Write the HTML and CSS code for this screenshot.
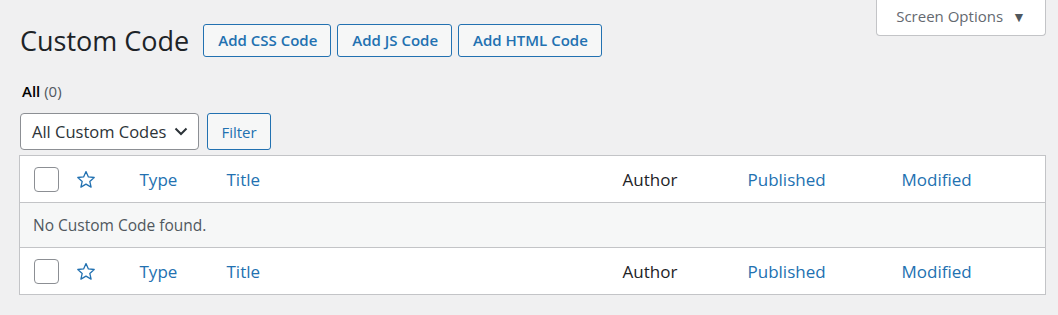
FILE: index.html
```html
<!DOCTYPE html>
<html>
<head>
    <title>Custom Code</title>
    <link rel="stylesheet" href="styles.css">
</head>
<body>

<div class="page-head">
    <div class="title-group">
        <h1>Custom Code</h1>
        <a class="title-action" href="#">Add CSS Code</a>
        <a class="title-action" href="#">Add JS Code</a>
        <a class="title-action" href="#">Add HTML Code</a>
    </div>
    <button type="button" class="screen-tab">Screen Options <span class="arrow">&#9660;</span></button>
</div>

<div class="wrap">
    <!-- Status links -->
    <ul class="subsubsub">
        <li><a class="current" href="#">All</a> <span class="count">(0)</span></li>
    </ul>

    <!-- Filter bar -->
    <div class="tablenav">
        <div class="select-box">
            <span>All Custom Codes</span>
            <svg width="14" height="9" viewBox="0 0 14 9"><path d="M1.5 1.5l5.5 5.5 5.5-5.5" fill="none" stroke="#2c3338" stroke-width="2"/></svg>
        </div>
        <button type="button" class="button">Filter</button>
    </div>

    <table class="list-table">
        <colgroup>
            <col style="width:48px">
            <col style="width:59px">
            <col style="width:87px">
            <col style="width:396px">
            <col style="width:125px">
            <col style="width:154px">
            <col>
        </colgroup>
        <thead>
            <tr>
                <td class="check"><span class="checkbox"></span></td>
                <td class="star"><svg width="20" height="19" viewBox="0 0 20 19"><path d="M10 1.6l2.4 5.3 5.8.6-4.4 3.9 1.3 5.7L10 14.1l-5.1 3 1.3-5.7-4.4-3.9 5.8-.6z" fill="none" stroke="#2271b1" stroke-width="1.3" stroke-linejoin="round"/></svg></td>
                <th class="sortable">Type</th>
                <th class="sortable">Title</th>
                <th>Author</th>
                <th class="sortable">Published</th>
                <th class="sortable">Modified</th>
            </tr>
        </thead>
        <tbody>
            <tr class="empty-row">
                <td colspan="7">No Custom Code found.</td>
            </tr>
        </tbody>
        <tfoot>
            <tr>
                <td class="check"><span class="checkbox"></span></td>
                <td class="star"><svg width="20" height="19" viewBox="0 0 20 19"><path d="M10 1.6l2.4 5.3 5.8.6-4.4 3.9 1.3 5.7L10 14.1l-5.1 3 1.3-5.7-4.4-3.9 5.8-.6z" fill="none" stroke="#2271b1" stroke-width="1.3" stroke-linejoin="round"/></svg></td>
                <th class="sortable">Type</th>
                <th class="sortable">Title</th>
                <th>Author</th>
                <th class="sortable">Published</th>
                <th class="sortable">Modified</th>
            </tr>
        </tfoot>
    </table>
</div>

</body>
</html>
```

FILE: styles.css
```css
/* Admin list screen */
body {
    margin: 0;
    background: #f0f0f1;
    color: #3c434a;
    font-family: "Open Sans", "Noto Sans", sans-serif;
    font-size: 16px;
}
.page-head {
    display: flex;
    align-items: flex-start;
    padding: 0 12px 0 20px;
}
.title-group {
    display: flex;
    align-items: center;
    margin-top: 24px;
}
h1 {
    margin: 0 14px 0 0;
    font-size: 27px;
    font-weight: 400;
    line-height: 33px;
    color: #1d2327;
}
.title-action {
    display: inline-block;
    height: 31px;
    line-height: 31px;
    padding: 0 13px 0 14px;
    margin-right: 6px;
    border: 1px solid #2271b1;
    border-radius: 3px;
    background: #f6f7f7;
    color: #2271b1;
    font-size: 15px;
    font-weight: 600;
    text-decoration: none;
}
.screen-tab {
    margin-left: auto;
    width: 170px;
    height: 36px;
    padding: 0 0 3px;
    border: 1px solid #c3c4c7;
    border-top: none;
    border-radius: 0 0 4px 4px;
    background: #fff;
    color: #646970;
    font-family: inherit;
    font-size: 15px;
}
.screen-tab .arrow {
    margin-left: 5px;
    font-size: 14px;
    color: #50575e;
}
.wrap {
    padding: 0 12px 0 19px;
}
.subsubsub {
    list-style: none;
    margin: 0;
    padding: 24px 0 0 3px;
    height: 21px;
    line-height: 21px;
    font-size: 15px;
}
.subsubsub a.current {
    color: #000;
    font-weight: 600;
    text-decoration: none;
}
.subsubsub .count {
    color: #50575e;
}
.tablenav {
    display: flex;
    gap: 8px;
    margin-top: 11px;
    padding-left: 1px;
}
.select-box {
    display: flex;
    align-items: center;
    justify-content: space-between;
    box-sizing: border-box;
    width: 179px;
    height: 37px;
    padding: 0 10px 0 11px;
    border: 1px solid #8c8f94;
    border-radius: 4px;
    background: #fff;
    color: #2c3338;
    font-size: 16.5px;
}
.button {
    box-sizing: border-box;
    width: 64px;
    height: 37px;
    padding: 0;
    border: 1px solid #2271b1;
    border-radius: 3px;
    background: #f6f7f7;
    color: #2271b1;
    font-family: inherit;
    font-size: 15px;
}
.list-table {
    margin-top: 5px;
    width: 100%;
    table-layout: fixed;
    border-collapse: collapse;
    border: 1px solid #c3c4c7;
    background: #fff;
}
.list-table th,
.list-table td {
    height: 46px;
    padding: 0 13px;
    text-align: left;
    font-weight: 400;
    font-size: 17px;
    vertical-align: middle;
}
.list-table thead tr {
    border-bottom: 1px solid #c3c4c7;
}
.list-table tfoot tr {
    border-top: 1px solid #c3c4c7;
}
.list-table th {
    color: #1d2327;
}
.list-table th.sortable {
    color: #2271b1;
}
.list-table td.check {
    padding: 0 0 0 14px;
}
.list-table td.star {
    padding: 0 0 0 8px;
}
.list-table td.star svg {
    display: block;
}
.checkbox {
    display: block;
    box-sizing: border-box;
    width: 25px;
    height: 25px;
    border: 1px solid #8c8f94;
    border-radius: 4px;
    background: #fff;
}
.empty-row td {
    background: #f6f7f7;
    color: #50575e;
    font-size: 15.5px;
    padding-left: 13px;
    height: 44px;
}
```
